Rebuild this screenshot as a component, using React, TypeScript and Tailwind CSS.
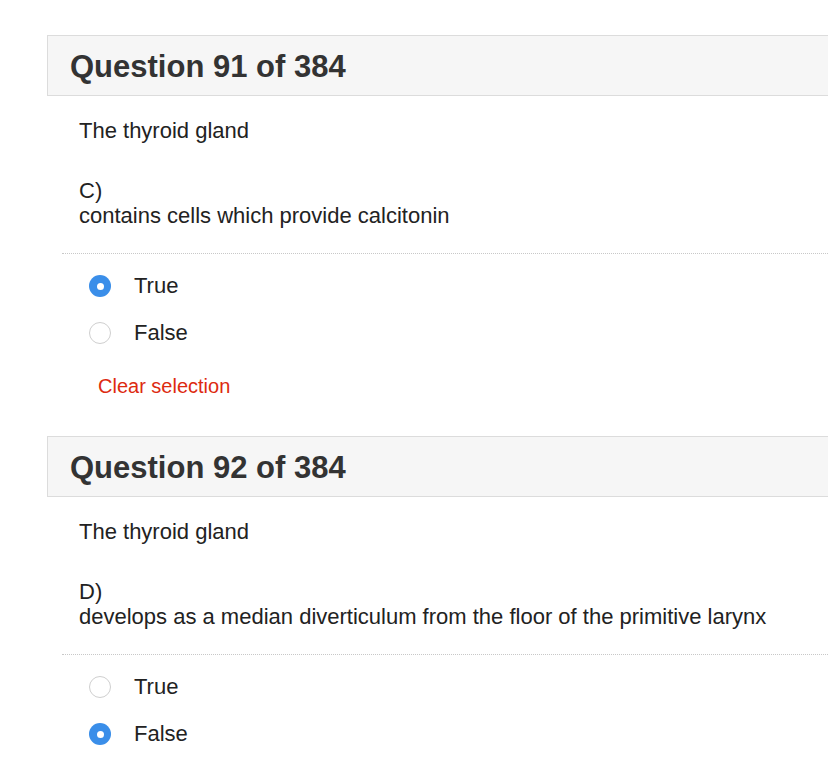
import { useState } from "react";

type Question = {
  num: number;
  stem: string;
  letter: string;
  statement: string;
  initial: "true" | "false" | null;
};

const questions: Question[] = [
  {
    num: 91,
    stem: "The thyroid gland",
    letter: "C)",
    statement: "contains cells which provide calcitonin",
    initial: "true",
  },
  {
    num: 92,
    stem: "The thyroid gland",
    letter: "D)",
    statement: "develops as a median diverticulum from the floor of the primitive larynx",
    initial: "false",
  },
];

function Radio({ checked }: { checked: boolean }) {
  return checked ? (
    <span className="flex h-[22px] w-[22px] shrink-0 items-center justify-center rounded-full bg-[#3a8ee9]">
      <span className="h-[7px] w-[7px] rounded-full bg-white" />
    </span>
  ) : (
    <span className="h-[22px] w-[22px] shrink-0 rounded-full border border-[#cfcfcf] bg-white" />
  );
}

function QuestionBlock({ q }: { q: Question }) {
  const [answer, setAnswer] = useState<"true" | "false" | null>(q.initial);

  return (
    <section className="mb-[38px]">
      <div className="border border-[#dcdcdc] bg-[#f6f6f6] pl-[22px] pt-[13px] pb-[11px]">
        <h2 className="text-[31px] font-bold leading-[35px] text-[#333333]">
          Question {q.num} of 384
        </h2>
      </div>

      <div className="pl-[32px] pt-[22px] text-[22px] leading-[25px] text-[#222222]">
        <p>{q.stem}</p>
        <p className="mt-[35px]">{q.letter}</p>
        <p>{q.statement}</p>
      </div>

      <div className="ml-[15px] mt-[25px] border-t border-dotted border-[#c8c8c8]" />

      <div className="flex flex-col gap-[23px] pl-[42px] pt-[20px]">
        {(["true", "false"] as const).map((value) => (
          <button
            key={value}
            onClick={() => setAnswer(value)}
            className="flex items-center gap-[23px] text-left text-[22px] leading-[24px] text-[#222222]"
          >
            <Radio checked={answer === value} />
            <span>{value === "true" ? "True" : "False"}</span>
          </button>
        ))}
      </div>

      <button
        onClick={() => setAnswer(null)}
        className="ml-[51px] mt-[29px] block text-[20px] leading-[24px] text-[#dd2a10]"
      >
        Clear selection
      </button>
    </section>
  );
}

export default function App() {
  return (
    <div
      className="h-[762px] w-[828px] overflow-hidden bg-white"
      style={{ fontFamily: '"Liberation Sans", Arial, Helvetica, sans-serif' }}
    >
      <div className="w-[880px] pl-[47px] pt-[35px]">
        {questions.map((q) => (
          <QuestionBlock key={q.num} q={q} />
        ))}
      </div>
    </div>
  );
}
